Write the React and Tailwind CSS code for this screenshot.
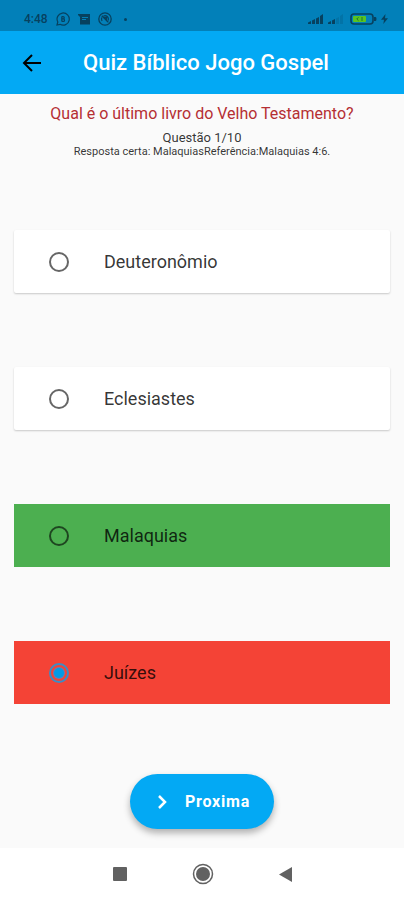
import React, { useState } from 'react';
import clsx from 'clsx';

const options = [
  { label: 'Deuteronômio', className: 'bg-white rounded-xs shadow-[0_1px_2px_rgba(0,0,0,0.2)]' },
  { label: 'Eclesiastes', className: 'bg-white rounded-xs shadow-[0_1px_2px_rgba(0,0,0,0.2)]' },
  { label: 'Malaquias', className: 'bg-[#4caf50]' },
  { label: 'Juízes', className: 'bg-[#f44336]' },
];

const StatusBar = () => (
  <div className="flex h-[31px] items-end justify-between bg-[#0280b9] pr-4 pb-1 pl-6 text-[#07415f]">
    <div className="flex items-center gap-2">
      <span className="text-xs leading-4 font-medium">4:48</span>
      <svg className="size-[14px]" viewBox="0 0 14 14" fill="none" stroke="currentColor" strokeWidth="1.2">
        <path d="M1 13l.8-3A6.1 6.1 0 1 1 4 12.300z" />
        <path d="M5.800 4.500v5M5.800 4.600h1.300a1.100 1.100 0 0 1 0 2.300H5.800h1.500a1.200 1.200 0 0 1 0 2.500H5.800" />
      </svg>
      <svg className="size-[12px]" viewBox="0 0 12 12">
        <path d="M0 1h12v10.500H2V4L0 2z" fill="currentColor" />
        <path d="M4 4.500h6M4 6.500h4" stroke="#0280b9" strokeWidth="1" />
      </svg>
      <svg className="size-[14px]" viewBox="0 0 14 14" fill="none" stroke="currentColor" strokeWidth="1.300">
        <circle cx="7" cy="7" r="6.200" />
        <path d="M3.800 3.800l6.600 6.600M4 9a4 4 0 0 1-.2-3.500M5.500 4a3.600 3.600 0 0 1 4.800 4.600" />
        <path d="M6.500 5.500h2v2.500z" fill="currentColor" />
      </svg>
      <span className="ml-1 size-[3px] rounded-full bg-current" />
    </div>
    <div className="flex items-center gap-1 pb-0.5">
      <svg className="h-[10px] w-4" viewBox="0 0 16 10" fill="currentColor">
        <path d="M0 10V8.500L3 7v3zM4 10V6.500L7 5v5zM8 10V4.500L11 3v7zM12 10V2l3-2v10z" />
      </svg>
      <svg className="h-[10px] w-4" viewBox="0 0 16 10" fill="currentColor">
        <path d="M0 10V8.500L3 7v3zM4 10V6.500L7 5v5z" />
        <path d="M8 10V4.500L11 3v7zM12 10V2l3-2v10z" opacity="0.2" />
      </svg>
      <svg className="ml-0.5 h-3 w-[27px]" viewBox="0 0 27 12">
        <rect x="1" y="1" width="22" height="10" rx="3" fill="none" stroke="currentColor" strokeWidth="1.600" />
        <path d="M24 4h1.500q1 0 1 2t-1 2H24z" fill="currentColor" />
        <rect x="3" y="3" width="13" height="6" rx="1" fill="#58c322" />
        <path d="M8.500 4.300L6.800 6l1.700 1.700M12 4v4" fill="none" stroke="#20742c" />
      </svg>
      <svg className="h-2.5 w-[7px]" viewBox="0 0 7 10">
        <path d="M4.500 0L0 5.800h3L2.300 10 7 4.200H4z" fill="currentColor" />
      </svg>
    </div>
  </div>
);

const Option = ({ label, className, checked, onSelect }) => (
  <label className={clsx('flex h-[63px] cursor-pointer items-center gap-[35px] px-[35px]', className)}>
    <span className="relative size-5">
      <input
        type="radio"
        name="resposta"
        checked={checked}
        onChange={onSelect}
        className="peer block size-5 appearance-none rounded-full border-2 border-black/60 checked:border-[#3b8dc6]"
      />
      <span className="pointer-events-none absolute inset-[5px] hidden rounded-full bg-[#039be5] ring-1 ring-[#6a7fb0] peer-checked:block" />
    </span>
    <span className="text-lg leading-6 text-black/80">{label}</span>
  </label>
);

export default function App() {
  const [selected, setSelected] = useState('Juízes');

  return (
    <div className="flex min-h-screen flex-col bg-[#fafafa] font-['Roboto',sans-serif]">
      <StatusBar />
      <header className="flex h-[63px] items-center bg-[#03a9f4] px-[20px]">
        <button type="button" aria-label="Voltar" className="text-black">
          <svg className="size-6" viewBox="0 0 24 24" fill="none" stroke="currentColor" strokeWidth="2">
            <path d="M21 12H4.800M12 4l-8 8 8 8" />
          </svg>
        </button>
        <h1 className="flex-1 pr-6 pl-2 text-center text-[22px] leading-8 font-medium text-white">Quiz Bíblico Jogo Gospel</h1>
      </header>

      <main className="flex flex-1 flex-col items-center px-[14px] pt-2">
        <h2 className="text-base leading-6 text-[#b52f33]">Qual é o último livro do Velho Testamento?</h2>
        <p className="mt-1 text-[13px] leading-4 text-black/80">Questão 1/10</p>
        <p className="text-[11px] leading-3 text-black/80">Resposta certa: MalaquiasReferência:Malaquias 4:6.</p>

        <div className="mt-[72px] flex w-full flex-col gap-[74px]">
          {options.map(({ label, className }) => (
            <Option
              key={label}
              label={label}
              className={className}
              checked={selected === label}
              onSelect={() => setSelected(label)}
            />
          ))}
        </div>

        <button
          type="button"
          className="mt-[70px] flex h-[55px] items-center gap-[11px] rounded-full bg-[#03a9f4] pr-6 pl-5 text-base font-bold tracking-wider text-white shadow-[0_4px_7px_rgba(0,0,0,0.3)]"
        >
          <svg className="size-6" viewBox="0 0 24 24" fill="none" stroke="currentColor" strokeWidth="2.500">
            <path d="M9 6l6 6-6 6" />
          </svg>
          Proxima
        </button>
      </main>

      <nav className="mt-[18px] flex h-[52px] items-center justify-center gap-[65px] bg-white text-[#616161]">
        <button type="button" aria-label="Recentes">
          <svg className="size-[14px]" viewBox="0 0 14 14">
            <rect width="14" height="14" rx="1" fill="currentColor" />
          </svg>
        </button>
        <button type="button" aria-label="Início">
          <svg className="size-[22px]" viewBox="0 0 22 22">
            <circle cx="11" cy="11" r="9.500" fill="none" stroke="currentColor" strokeWidth="1.500" />
            <circle cx="11" cy="11" r="7" fill="currentColor" />
          </svg>
        </button>
        <button type="button" aria-label="Voltar ao anterior">
          <svg className="h-[15px] w-[13px]" viewBox="0 0 13 15">
            <path d="M13 0v15L0 7.500z" fill="currentColor" />
          </svg>
        </button>
      </nav>
    </div>
  );
}
